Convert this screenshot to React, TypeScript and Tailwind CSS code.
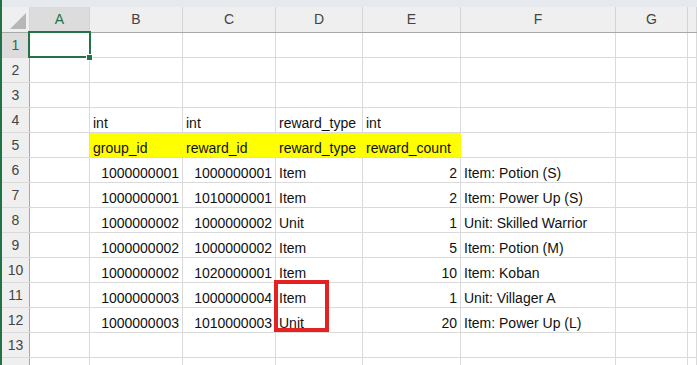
const widths = [
  "w-[28px]",
  "w-[60px]",
  "w-[93px]",
  "w-[93px]",
  "w-[87px]",
  "w-[98px]",
  "w-[155px]",
  "w-[72px]",
];

const letters = ["A", "B", "C", "D", "E", "F", "G", ""];

type Row = (string | number | null)[];

// columns A..H
const rows: Row[] = [
  [null, null, null, null, null, null, null, null],
  [null, null, null, null, null, null, null, null],
  [null, null, null, null, null, null, null, null],
  [null, "int", "int", "reward_type", "int", null, null, null],
  [null, "group_id", "reward_id", "reward_type", "reward_count", null, null, null],
  [null, 1000000001, 1000000001, "Item", 2, "Item: Potion (S)", null, null],
  [null, 1000000001, 1010000001, "Item", 2, "Item: Power Up (S)", null, null],
  [null, 1000000002, 1000000002, "Unit", 1, "Unit: Skilled Warrior", null, null],
  [null, 1000000002, 1000000002, "Item", 5, "Item: Potion (M)", null, null],
  [null, 1000000002, 1020000001, "Item", 10, "Item: Koban", null, null],
  [null, 1000000003, 1000000004, "Item", 1, "Unit: Villager A", null, null],
  [null, 1000000003, 1010000003, "Unit", 20, "Item: Power Up (L)", null, null],
  [null, null, null, null, null, null, null, null],
  [null, null, null, null, null, null, null, null],
];

function DataCell({ col, value, yellow }: { col: number; value: string | number | null; yellow: boolean }) {
  const w = col < 7 ? widths[col + 1] : "flex-1";
  const isNum = typeof value === "number";
  return (
    <div
      className={`${w} shrink-0 h-full flex items-end whitespace-nowrap border-r ${
        yellow ? "bg-[#ffff00] border-[#ffff00]" : "border-[#dadada]"
      } ${isNum ? "justify-end pr-[3px]" : "pl-[3px]"}`}
    >
      {value !== null && <span className="leading-[18px]">{value}</span>}
    </div>
  );
}

export default function App() {
  return (
    <div className="relative w-[697px] h-[365px] overflow-hidden bg-white border-l-2 border-[#217346] font-['Liberation_Sans',Arial,sans-serif] text-[14px] text-[#111]">
      <div className="h-[7px] bg-[#e6e9ed]" />

      {/* column headers */}
      <div className="flex h-[26px] bg-[#efefef] border-b border-[#a8a8a8]">
        <div className="w-[28px] shrink-0 border-r border-[#d4d4d4] relative">
          <svg width="28" height="25" className="absolute left-0 top-0">
            <polygon points="24,6 24,22 8,22" fill="#b7b7b7" />
          </svg>
        </div>
        {letters.map((l, i) => (
          <div
            key={i}
            className={`${i < 7 ? widths[i + 1] : "flex-1"} shrink-0 border-r border-[#d4d4d4] flex justify-center text-[14px] leading-[25px] ${
              i === 0 ? "bg-[#dcdcdc] text-[#217346]" : "text-[#444]"
            }`}
          >
            {l}
          </div>
        ))}
      </div>

      {rows.map((r, ri) => (
        <div key={ri} className="flex h-[25px] border-b border-[#dadada]">
          <div
            className={`w-[28px] shrink-0 h-full flex justify-center items-center text-[14px] leading-[24px] border-r border-[#a8a8a8] ${
              ri === 0 ? "bg-[#dcdcdc] text-[#217346]" : "bg-[#efefef] text-[#444]"
            }`}
          >
            {ri + 1}
          </div>
          {r.map((v, ci) => (
            <DataCell key={ci} col={ci} value={v} yellow={ri === 4 && ci >= 1 && ci <= 4} />
          ))}
        </div>
      ))}

      {/* active cell A1 */}
      <div className="absolute left-[26px] top-[31px] w-[63px] h-[27px] border-2 border-[#217346]" />
      <div className="absolute left-[84px] top-[54px] w-[7px] h-[7px] bg-[#217346] border border-white" />

      {/* annotation box */}
      <div className="absolute left-[272px] top-[280px] w-[55px] h-[52px] border-4 border-[#e52222]" />
    </div>
  );
}
